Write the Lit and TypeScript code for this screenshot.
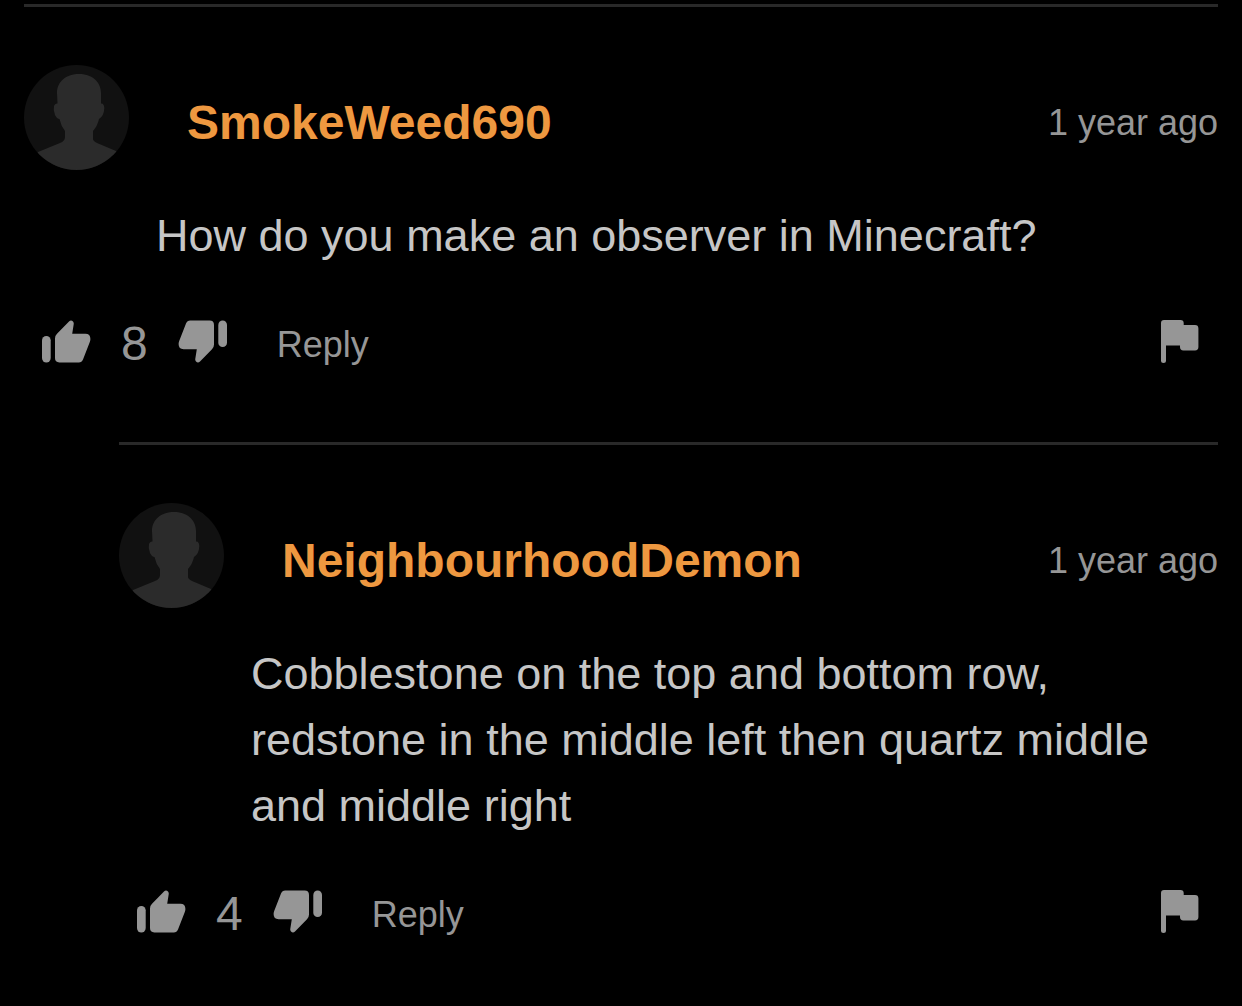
import { LitElement, html, css, svg } from "lit";
import { customElement, property } from "lit/decorators.js";

interface Comment {
  author: string;
  age: string;
  text: string;
  votes: number;
  replies: Comment[];
}

const thread: Comment = {
  author: "SmokeWeed690",
  age: "1 year ago",
  text: "How do you make an observer in Minecraft?",
  votes: 8,
  replies: [
    {
      author: "NeighbourhoodDemon",
      age: "1 year ago",
      text: "Cobblestone on the top and bottom row, redstone in the middle left then quartz middle and middle right",
      votes: 4,
      replies: [],
    },
  ],
};

const thumb = svg`
  <rect x="0" y="16" width="8.7" height="26.4" rx="4.3" />
  <path d="M13 18.4Q13 15.6 15 13.7L27 1.4Q29 -.6 31 1.4Q32 2.5 31.7 4.2L30.2 13.8H43.4Q48.4 13.8 48.4 19Q48.4 20.4 47.8 22L41 39.4Q39.8 42.4 36.8 42.4H17.4Q13 42.4 13 38Z" />
`;

@customElement("user-comment")
export class UserComment extends LitElement {
  @property({ attribute: false }) comment!: Comment;

  static styles = css`
    :host {
      display: block;
    }
    .comment {
      border-top: 3px solid #292929;
      padding-top: 58px;
    }
    .head {
      display: flex;
      align-items: center;
      height: 115px;
    }
    .avatar {
      align-self: flex-start;
      flex: none;
      width: 105px;
      height: 105px;
      border-radius: 50%;
      background: #111;
      fill: #2b2b2b;
      overflow: hidden;
    }
    .author {
      margin-left: 58px;
      font-size: 48px;
      line-height: 56px;
      font-weight: 700;
      color: #ee9840;
      text-decoration: none;
    }
    .age {
      margin-left: auto;
      font-size: 36px;
      line-height: 48px;
      color: #969696;
      white-space: nowrap;
    }
    .text {
      margin: 23px 0 0 132px;
      font-size: 45px;
      line-height: 66px;
      color: #c6c6c6;
    }
    .actions {
      display: flex;
      align-items: flex-start;
      margin-top: 51px;
      padding: 0 19px 0 18px;
      color: #969696;
      line-height: 48px;
    }
    button {
      display: block;
      margin: 0;
      padding: 0;
      border: 0;
      background: none;
      font: inherit;
      color: inherit;
      cursor: pointer;
    }
    .icon {
      display: block;
      height: 43px;
      fill: currentColor;
    }
    .down {
      transform: rotate(180deg);
    }
    .votes {
      margin: 0 30px;
      font-size: 48px;
    }
    .reply {
      margin-left: 50px;
      font-size: 36px;
      line-height: 50px;
    }
    .flag {
      margin-left: auto;
    }
    .replies {
      margin: 72px 0 0 95px;
    }
  `;

  render() {
    const c = this.comment;
    return html`
      <article class="comment">
        <header class="head">
          <svg class="avatar" viewBox="0 0 105 105" aria-hidden="true">
            <path
              d="M0 105L14 87L36 78Q41 76 41 72V66Q37 61 35.5 54Q33 54 31 50Q29 45 30 41Q31 38 33.5 38.5L33 28C33 16 43 9 55 9C67 9 77 16 77 28L77 38.5Q80 38 80.3 43Q80 51 75 54Q73.500 61 69 66V74Q69 76 73 78L92 86L105 105Z"
            />
          </svg>
          <a class="author" href="#">${c.author}</a>
          <time class="age">${c.age}</time>
        </header>
        <p class="text">${c.text}</p>
        <div class="actions">
          <button type="button" aria-label="Like">
            <svg class="icon" width="49" viewBox="0 0 49 43">${thumb}</svg>
          </button>
          <span class="votes">${c.votes}</span>
          <button type="button" aria-label="Dislike">
            <svg class="icon down" width="49" viewBox="0 0 49 43">${thumb}</svg>
          </button>
          <button type="button" class="reply">Reply</button>
          <button type="button" class="flag" aria-label="Report">
            <svg class="icon" width="38" viewBox="0 0 38 43">
              <path
                d="M3 0H19.500Q22.700 0 22.700 3V5H34Q37.400 5 37.400 8.400V27Q37.400 30.400 34 30.400H22.400Q19 30.400 19 27V25.400H5V40.400A2.500 2.500 0 0 1 0 40.400V3Q0 0 3 0Z"
              />
            </svg>
          </button>
        </div>
        ${c.replies.length
          ? html`<section class="replies">
              ${c.replies.map((r) => html`<user-comment .comment=${r}></user-comment>`)}
            </section>`
          : null}
      </article>
    `;
  }
}

@customElement("app-root")
export class AppRoot extends LitElement {
  static styles = css`
    :host {
      display: block;
      box-sizing: border-box;
      min-height: 100vh;
      padding: 4px 24px 64px;
      background: #000;
      font-family: "Liberation Sans", Arial, sans-serif;
    }
  `;

  render() {
    return html`<user-comment .comment=${thread}></user-comment>`;
  }
}
